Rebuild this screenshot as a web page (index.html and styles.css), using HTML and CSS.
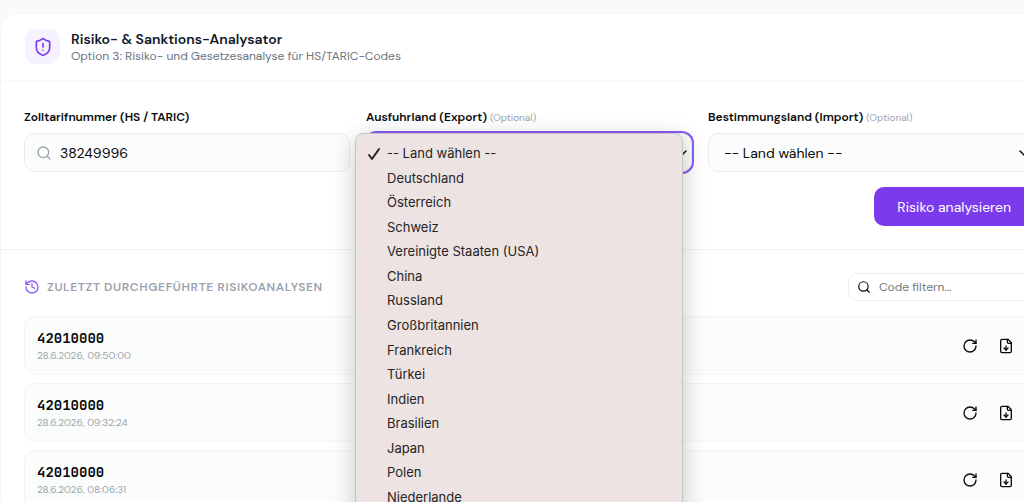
FILE: index.html
```html
<!DOCTYPE html>
<html lang="de">
<head>
    <meta charset="UTF-8">
    <meta name="viewport" content="width=device-width, initial-scale=1.0">
    <title>Risiko- &amp; Sanktions-Analysator</title>
    <link rel="stylesheet" href="styles.css">
</head>
<body>
    <svg class="icon-defs" width="0" height="0" aria-hidden="true">
        <symbol id="icon-search" viewBox="0 0 24 24">
            <circle cx="11" cy="11" r="8"/>
            <path d="m21 21-4.3-4.3"/>
        </symbol>
        <symbol id="icon-chevron" viewBox="0 0 10 6">
            <path d="m1 1 4 4 4-4"/>
        </symbol>
        <symbol id="icon-reload" viewBox="0 0 24 24">
            <path d="M21 12a9 9 0 1 1-9-9c2.52 0 4.93 1 6.74 2.74L21 8"/>
            <path d="M21 3v5h-5"/>
        </symbol>
        <symbol id="icon-file-down" viewBox="0 0 24 24">
            <path d="M15 2H6a2 2 0 0 0-2 2v16a2 2 0 0 0 2 2h12a2 2 0 0 0 2-2V7Z"/>
            <path d="M14 2v4a2 2 0 0 0 2 2h4"/>
            <path d="M12 18v-6"/>
            <path d="m9 15 3 3 3-3"/>
        </symbol>
    </svg>

    <main class="card">
        <header class="card-header">
            <div class="header-icon">
                <svg class="icon" width="20" height="20" viewBox="0 0 24 24">
                    <path d="M20 13c0 5-3.5 7.5-7.66 8.95a1 1 0 0 1-.67-.01C7.5 20.5 4 18 4 13V6a1 1 0 0 1 1-1c2 0 4.5-1.2 6.24-2.72a1.17 1.17 0 0 1 1.52 0C14.51 3.81 17 5 19 5a1 1 0 0 1 1 1z"/>
                    <path d="M12 8v4"/>
                    <path d="M12 16h.01"/>
                </svg>
            </div>
            <div class="header-text">
                <h1 class="title">Risiko- &amp; Sanktions-Analysator</h1>
                <p class="subtitle">Option 3: Risiko- und Gesetzesanalyse für HS/TARIC-Codes</p>
            </div>
        </header>

        <form class="form">
            <div class="fields">
                <div class="field">
                    <label class="label" for="hs-code">Zolltarifnummer (HS / TARIC)</label>
                    <div class="control">
                        <svg class="icon search-icon" width="16" height="16"><use href="#icon-search"/></svg>
                        <input class="input" id="hs-code" type="text" value="38249996">
                    </div>
                </div>
                <div class="field">
                    <label class="label" for="export">Ausfuhrland (Export) <span class="optional">(Optional)</span></label>
                    <div class="control">
                        <select class="select select-open" id="export">
                            <option>-- Land wählen --</option>
                        </select>
                        <svg class="icon chevron" width="10" height="6"><use href="#icon-chevron"/></svg>
                        <ul class="menu" role="listbox" aria-label="Ausfuhrland">
                            <li class="menu-item" role="option" aria-selected="true">
                                <svg class="icon check" width="14" height="14" viewBox="0 0 14 14"><path d="m2 8 3 4 7-10"/></svg>
                                -- Land wählen --
                            </li>
                            <li class="menu-item" role="option">Deutschland</li>
                            <li class="menu-item" role="option">Österreich</li>
                            <li class="menu-item" role="option">Schweiz</li>
                            <li class="menu-item" role="option">Vereinigte Staaten (USA)</li>
                            <li class="menu-item" role="option">China</li>
                            <li class="menu-item" role="option">Russland</li>
                            <li class="menu-item" role="option">Großbritannien</li>
                            <li class="menu-item" role="option">Frankreich</li>
                            <li class="menu-item" role="option">Türkei</li>
                            <li class="menu-item" role="option">Indien</li>
                            <li class="menu-item" role="option">Brasilien</li>
                            <li class="menu-item" role="option">Japan</li>
                            <li class="menu-item" role="option">Polen</li>
                            <li class="menu-item" role="option">Niederlande</li>
                        </ul>
                    </div>
                </div>
                <div class="field">
                    <label class="label" for="import">Bestimmungsland (Import) <span class="optional">(Optional)</span></label>
                    <div class="control">
                        <select class="select" id="import">
                            <option>-- Land wählen --</option>
                        </select>
                        <svg class="icon chevron" width="10" height="6"><use href="#icon-chevron"/></svg>
                    </div>
                </div>
            </div>
            <button class="submit-btn" type="button">Risiko analysieren</button>
        </form>

        <section class="history">
            <div class="history-header">
                <h2 class="history-title">
                    <svg class="icon history-icon" width="16" height="16" viewBox="0 0 24 24">
                        <path d="M3 12a9 9 0 1 0 9-9 9.75 9.75 0 0 0-6.74 2.74L3 8"/>
                        <path d="M3 3v5h5"/>
                        <path d="M12 7v5l4 2"/>
                    </svg>
                    Zuletzt durchgeführte Risikoanalysen
                </h2>
                <div class="filter">
                    <svg class="icon" width="14" height="14"><use href="#icon-search"/></svg>
                    <input class="filter-input" type="text" placeholder="Code filtern..." aria-label="Code filtern">
                </div>
            </div>

            <ul class="history-list">
                <li class="history-item">
                    <div class="entry">
                        <span class="code">42010000</span>
                        <time class="date">28.6.2026, 09:50:00</time>
                    </div>
                    <button class="icon-btn" type="button" aria-label="Erneut analysieren"><svg class="icon" width="16" height="16"><use href="#icon-reload"/></svg></button>
                    <button class="icon-btn" type="button" aria-label="Herunterladen"><svg class="icon" width="16" height="16"><use href="#icon-file-down"/></svg></button>
                </li>
                <li class="history-item">
                    <div class="entry">
                        <span class="code">42010000</span>
                        <time class="date">28.6.2026, 09:32:24</time>
                    </div>
                    <button class="icon-btn" type="button" aria-label="Erneut analysieren"><svg class="icon" width="16" height="16"><use href="#icon-reload"/></svg></button>
                    <button class="icon-btn" type="button" aria-label="Herunterladen"><svg class="icon" width="16" height="16"><use href="#icon-file-down"/></svg></button>
                </li>
                <li class="history-item">
                    <div class="entry">
                        <span class="code">42010000</span>
                        <time class="date">28.6.2026, 08:06:31</time>
                    </div>
                    <button class="icon-btn" type="button" aria-label="Erneut analysieren"><svg class="icon" width="16" height="16"><use href="#icon-reload"/></svg></button>
                    <button class="icon-btn" type="button" aria-label="Herunterladen"><svg class="icon" width="16" height="16"><use href="#icon-file-down"/></svg></button>
                </li>
            </ul>
        </section>
    </main>
</body>
</html>
```
FILE: styles.css
```css
* {
    box-sizing: border-box;
}

body {
    margin: 0;
    padding-top: 13px;
    height: 100vh;
    overflow: hidden;
    background-color: #f8fafc;
    color: #0a0a0a;
    font-family: "DM Sans", Inter, "Liberation Sans", sans-serif;
    font-size: 12px;
}

h1, h2, p, ul {
    margin: 0;
    padding: 0;
}

ul {
    list-style: none;
}

input, select, button {
    font-family: inherit;
    color: inherit;
}

.icon-defs {
    position: absolute;
}

.icon {
    flex: none;
    fill: none;
    stroke: currentColor;
    stroke-width: 2;
    stroke-linecap: round;
    stroke-linejoin: round;
}

/* card runs past the right edge of the window */
.card {
    margin-right: -35px;
    background: #ffffff;
    border: 1px solid #f3f5f7;
    border-radius: 16px;
}

.card-header {
    display: flex;
    align-items: center;
    gap: 11px;
    padding: 15px 24px 16px;
    border-bottom: 1px solid #f7f8fa;
}

.header-icon {
    display: flex;
    align-items: center;
    justify-content: center;
    width: 35px;
    height: 35px;
    border-radius: 11px;
    background: #f5f3ff;
    color: #7c3aed;
}

.title {
    font-size: 14px;
    font-weight: 600;
    line-height: 18px;
    color: #0f172a;
}

.subtitle {
    font-size: 12px;
    line-height: 16px;
    color: #6b7280;
}

/* form */
.form {
    display: flex;
    flex-direction: column;
    align-items: flex-end;
    gap: 15px;
    padding: 28px 24px 23px 23px;
    border-bottom: 1px solid #eef0f2;
}

.fields {
    display: grid;
    grid-template-columns: repeat(3, 1fr);
    gap: 16px;
    width: 100%;
}

.label {
    display: block;
    margin-bottom: 8px;
    font-size: 12px;
    font-weight: 600;
    line-height: 16px;
}

.optional {
    font-size: 10px;
    font-weight: 400;
    line-height: 1;
    color: #9ca3af;
}

.control {
    position: relative;
}

.input, .select {
    display: block;
    width: 100%;
    height: 39px;
    border: 1px solid #e9eeec;
    border-radius: 10px;
    background: #fbfdfc;
    font-size: 14px;
    outline: none;
}

.input {
    padding: 0 12px 0 35px;
}

.select {
    padding: 0 24px 0 15px;
    appearance: none;
}

.select-open {
    box-shadow: 0 0 0 2px #8b5cf6;
}

.search-icon {
    position: absolute;
    left: 12px;
    top: 12px;
    color: #9ca3af;
}

.chevron {
    position: absolute;
    right: 5px;
    top: 17px;
    stroke-width: 1.5;
    pointer-events: none;
}

.submit-btn {
    height: 39px;
    padding: 0 23px;
    border: none;
    border-radius: 10px;
    background: #7c3aed;
    color: #ffffff;
    font-size: 14px;
    cursor: pointer;
}

/* open country list */
.menu {
    position: absolute;
    top: 0;
    left: -11px;
    right: 9px;
    z-index: 2;
    display: flex;
    flex-direction: column;
    height: 386px;
    padding: 7px 0 9px;
    border: 1px solid #c9c4c4;
    border-radius: 8px;
    background: #ece3e2;
    box-shadow: 0 6px 24px rgba(0, 0, 0, 0.22);
    color: #262424;
    font-family: Inter, sans-serif;
    font-size: 13px;
}

.menu-item {
    position: relative;
    flex: 1;
    display: flex;
    align-items: center;
    padding-left: 31px;
}

.check {
    position: absolute;
    left: 11px;
    top: 6px;
}

/* history */
.history {
    padding: 23px 24px 23px 23px;
}

.history-header {
    display: flex;
    align-items: center;
    justify-content: space-between;
    margin-bottom: 15px;
}

.history-title {
    display: flex;
    align-items: center;
    gap: 7px;
    font-size: 12px;
    font-weight: 600;
    letter-spacing: 0.05em;
    text-transform: uppercase;
    color: #9ca3af;
}

.history-icon {
    color: #8b5cf6;
}

.filter {
    display: flex;
    align-items: center;
    gap: 8px;
    width: 186px;
    height: 28px;
    padding: 0 8px;
    border: 1px solid #eaecee;
    border-radius: 10px;
}

.filter-input {
    flex: 1;
    min-width: 0;
    padding: 0;
    border: none;
    outline: none;
    background: none;
    font-size: 12px;
}

.filter-input::placeholder {
    color: #757575;
}

.history-list {
    display: flex;
    flex-direction: column;
    gap: 8px;
}

.history-item {
    display: flex;
    align-items: center;
    gap: 4px;
    padding: 11px 11px 11px 12px;
    border: 1px solid #f3f5f4;
    border-radius: 11px;
    background: #fbfdfc;
}

.entry {
    flex: 1;
    display: flex;
    flex-direction: column;
}

.code {
    font-family: "JetBrains Mono", "Liberation Mono", monospace;
    font-size: 14px;
    font-weight: 600;
    line-height: 20px;
}

.date {
    font-size: 10px;
    line-height: 15px;
    color: #9ca3af;
}

.icon-btn {
    display: flex;
    align-items: center;
    justify-content: center;
    width: 32px;
    height: 32px;
    padding: 0;
    border: none;
    background: none;
    cursor: pointer;
}
```
